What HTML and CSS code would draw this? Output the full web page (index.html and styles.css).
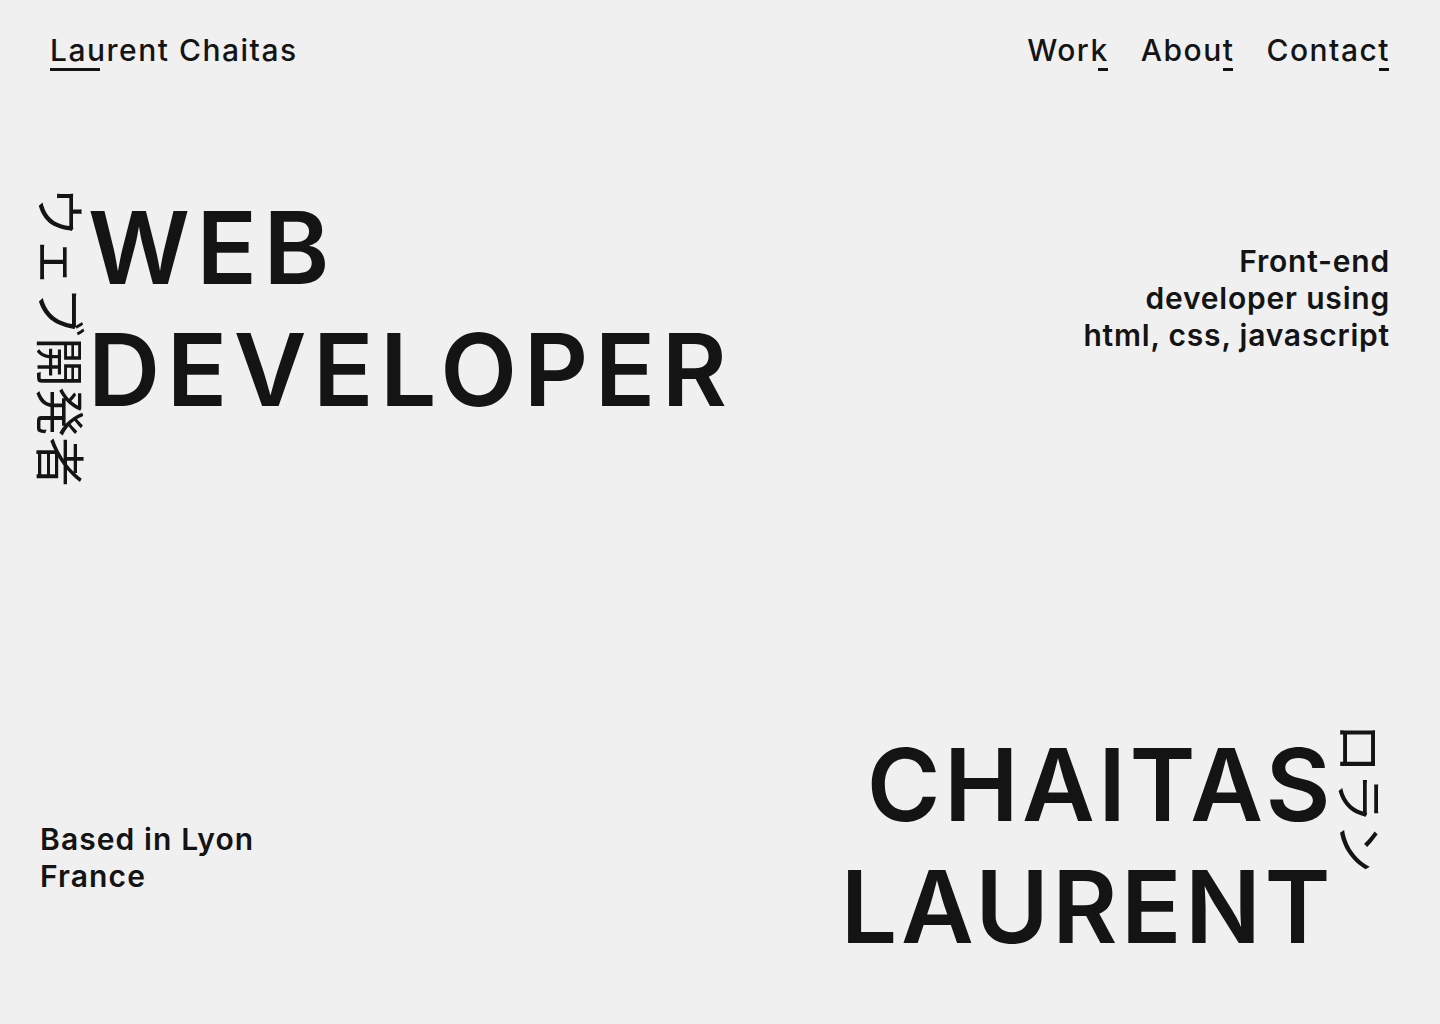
FILE: index.html
```html
<!DOCTYPE html>
<html lang="en">
<head>
<meta charset="utf-8">
<title>Laurent Chaitas</title>
<link rel="stylesheet" href="styles.css">
</head>
<body>
<div class="page">
  <header class="top">
    <a class="logo" href="#">Laurent Chaitas</a>
    <nav class="nav">
      <a class="nav-link" href="#">Work</a>
      <a class="nav-link" href="#">About</a>
      <a class="nav-link" href="#">Contact</a>
    </nav>
  </header>
  <main class="stage">
    <section class="row row-top">
      <div class="title-block">
        <span class="jp jp-left" lang="ja">ウェブ開発者</span>
        <h1 class="big big-left">WEB<br>DEVELOPER</h1>
      </div>
      <p class="tagline">Front-end<br>developer using<br>html, css, javascript</p>
    </section>
    <section class="row row-bottom">
      <p class="location">Based in Lyon<br>France</p>
      <div class="name-block">
        <h2 class="big big-right">CHAITAS<br>LAURENT</h2>
        <span class="jp jp-right" lang="ja">ロラン</span>
      </div>
    </section>
  </main>
</div>
</body>
</html>
```
FILE: styles.css
```css
html, body {
  margin: 0;
  padding: 0;
}
body {
  background: #f0f0f0;
  color: #141414;
  font-family: "Inter", "Noto Sans", sans-serif;
}
.page {
  height: 100vh;
  display: flex;
  flex-direction: column;
}
.top {
  display: flex;
  justify-content: space-between;
  align-items: flex-start;
  padding: 32px 50px 0 50px;
}
.logo, .nav-link {
  position: relative;
  color: inherit;
  text-decoration: none;
  font-size: 30px;
  line-height: 37px;
  font-weight: 500;
  letter-spacing: 1.5px;
}
.logo::after {
  content: "";
  position: absolute;
  left: 0;
  top: 36px;
  width: 50px;
  height: 3px;
  background: #141414;
}
.nav {
  display: flex;
  gap: 32px;
}
.nav-link::after {
  content: "";
  position: absolute;
  right: 1px;
  top: 36px;
  width: 10px;
  height: 3px;
  background: #141414;
}
.stage {
  flex: 1;
  display: flex;
  flex-direction: column;
  justify-content: space-between;
  padding: 118px 0 56px 0;
}
.row {
  display: flex;
  justify-content: space-between;
  align-items: flex-start;
}
.row-top {
  padding: 0 50px 0 38px;
}
.row-bottom {
  padding: 0 52px 0 40px;
}
.title-block, .name-block {
  display: flex;
  align-items: flex-start;
}
.title-block {
  gap: 0;
}
.name-block {
  gap: 4px;
}
.jp {
  writing-mode: vertical-rl;
  text-orientation: sideways;
  font-family: "Noto Sans CJK JP", sans-serif;
  font-size: 50px;
  line-height: 50px;
  font-weight: 400;
  letter-spacing: 0;
}
.jp-left {
  margin-top: 0;
}
.jp-right {
  margin-top: -1px;
}
.big {
  margin: 0;
  font-size: 100px;
  line-height: 122px;
  font-weight: 600;
}
.big-left {
  letter-spacing: 6.5px;
}
.big-right {
  text-align: right;
  letter-spacing: 3.5px;
}
.tagline, .location {
  margin: 0;
  font-size: 30px;
  line-height: 37px;
  font-weight: 600;
}
.tagline {
  text-align: right;
  margin-top: 56px;
  letter-spacing: 0.8px;
}
.location {
  margin-top: 97px;
  letter-spacing: 1.1px;
}
```
